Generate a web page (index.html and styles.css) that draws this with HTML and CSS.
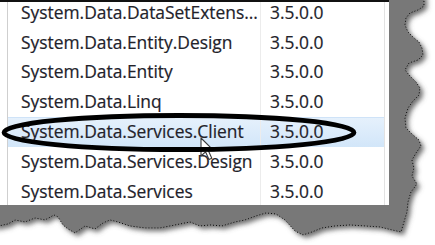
FILE: index.html
```html
<!DOCTYPE html>
<html>
<head>
<meta charset="utf-8">
<link rel="stylesheet" href="styles.css">
</head>
<body>
<div class="stage">
  <svg class="torn" width="435" height="245" viewBox="0 0 435 245">
    <defs>
      <filter id="sh" x="-10%" y="-10%" width="130%" height="130%">
        <feDropShadow dx="3" dy="3" stdDeviation="2.5" flood-color="#555" flood-opacity="0.85"/>
      </filter>
    </defs>
    <polygon filter="url(#sh)" fill="#787878" stroke="#000" stroke-width="1" stroke-dasharray="1 2"
      points="380,-6 424,-6 424,6 418,10 410,13 406,18 405,25 408,32 413,37 419,42 422,48 423,55 418,60 409,63 405,70 410,76 416,82 420,88 419,95 413,101 408,108 405,118 406,128 412,134 419,140 421,146 416,153 412,160 414,168 412,176 417,184 411,192 408,202 407,212 404,222 401,232 392,230 380,227 365,226 350,225 335,226 322,228 312,232 303,235 295,231 285,220 276,214 266,213 256,216 245,220 235,222 222,226 210,225 200,226 190,222 175,225 160,228 145,228 130,226 118,222 110,220 103,223 95,229 85,226 75,233 68,229 63,225 58,217 54,215 45,220 35,218 25,222 15,220 8,224 -6,227 -6,190 380,190"/>
  </svg>

  <div class="panel">
    <div class="list">
      <div class="row"><span class="gutter"></span><span class="name">System.Data.DataSetExtens...</span><span class="ver">3.5.0.0</span></div>
      <div class="row"><span class="gutter"></span><span class="name">System.Data.Entity.Design</span><span class="ver">3.5.0.0</span></div>
      <div class="row"><span class="gutter"></span><span class="name">System.Data.Entity</span><span class="ver">3.5.0.0</span></div>
      <div class="row"><span class="gutter"></span><span class="name">System.Data.Linq</span><span class="ver">3.5.0.0</span></div>
      <div class="row selected"><span class="gutter"></span><span class="name">System.Data.Services.Client</span><span class="ver">3.5.0.0</span></div>
      <div class="row"><span class="gutter"></span><span class="name">System.Data.Services.Design</span><span class="ver">3.5.0.0</span></div>
      <div class="row"><span class="gutter"></span><span class="name">System.Data.Services</span><span class="ver">3.5.0.0</span></div>
    </div>
  </div>

  <svg class="cursor" width="16" height="26" viewBox="0 0 16 26">
    <path d="M1 1 L1 19 L5.5 14.8 L9 22.5 L11.8 21.3 L8.4 13.8 L14 13.8 Z" fill="#fff" stroke="#3a3a3a" stroke-width="1.1" stroke-linejoin="round"/>
  </svg>

  <svg class="ring" width="435" height="245" viewBox="0 0 435 245">
    <ellipse cx="179" cy="132.5" rx="175" ry="17" fill="none" stroke="#000" stroke-width="4.8"/>
  </svg>
</div>
</body>
</html>
```

FILE: styles.css
```css
html, body {
  margin: 0;
  padding: 0;
  background: #fff;
}

.stage {
  position: relative;
  width: 435px;
  height: 245px;
  overflow: hidden;
  background: #fff;
}

.torn {
  position: absolute;
  left: 0;
  top: 0;
}

.panel {
  position: relative;
  width: 389px;
  height: 205px;
  background: #fff;
  border-top: 2px solid #111;
  box-sizing: border-box;
  overflow: hidden;
}

.list {
  margin-top: -4.3px;
  display: flex;
  flex-direction: column;
}

.row {
  height: 29.83px;
  display: grid;
  grid-template-columns: 8px 253px 124px 4px;
  font-family: "Open Sans", "Noto Sans", sans-serif;
  font-size: 17.4px;
  line-height: 28.5px;
  color: #22222a;
  -webkit-text-stroke: 0.2px #22222a;
  box-sizing: border-box;
  white-space: nowrap;
}

.gutter {
  border-right: 1px solid #cfcfcf;
  background: #fff;
}

.name {
  padding-left: 13px;
  border-right: 1px solid #ececec;
  overflow: hidden;
}

.ver {
  padding-left: 9px;
  border-right: 1px solid #e2e2e2;
}

.row.selected .name,
.row.selected .ver {
  background: linear-gradient(#e6f1fc, #d2e6f9);
  box-shadow: inset 0 1px 0 #cfe3f8;
}

.cursor {
  position: absolute;
  left: 200px;
  top: 137px;
}

.ring {
  position: absolute;
  left: 0;
  top: 0;
}
```
